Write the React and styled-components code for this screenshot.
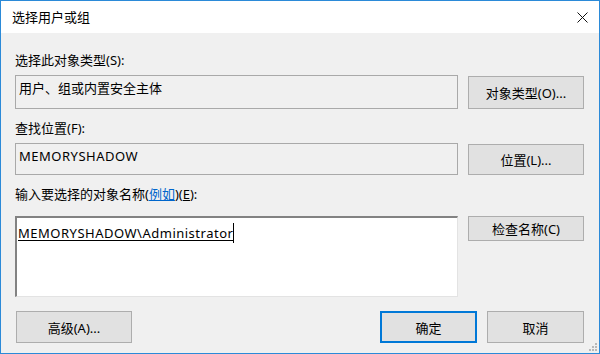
import React from 'react';
import styled, { createGlobalStyle } from 'styled-components';

const GlobalStyle = createGlobalStyle`
  html, body {
    margin: 0;
    padding: 0;
    background: #ffffff;
  }
  * {
    box-sizing: border-box;
  }
`;

const Window = styled.div`
  position: relative;
  width: 600px;
  height: 354px;
  border: 1px solid #2b8ad8;
  background: #f0f0f0;
  font-family: 'Noto Sans', 'Noto Sans CJK SC', sans-serif;
  font-size: 13px;
  color: #000;
  display: flex;
  flex-direction: column;
`;

const TitleBar = styled.div`
  height: 32px;
  background: #ffffff;
  display: flex;
  align-items: center;
  justify-content: space-between;
  padding: 0 0 0 11px;
`;

const Title = styled.span`
  font-size: 13px;
  line-height: 16px;
`;

const CloseButton = styled.div`
  width: 46px;
  height: 32px;
  display: flex;
  align-items: center;
  justify-content: center;
  margin-right: -6px;
`;

const Body = styled.div`
  flex: 1;
  padding: 19px 15px 0 14px;
  display: flex;
  flex-direction: column;
`;

const Label = styled.div`
  line-height: 16px;
  height: 16px;
  margin-top: ${p => p.$top || 0}px;
  white-space: nowrap;
`;

const Row = styled.div`
  display: grid;
  grid-template-columns: 443px 116px;
  column-gap: 10px;
  align-items: ${p => p.$align || 'stretch'};
  margin-top: ${p => p.$top || 0}px;
`;

const ReadBox = styled.div`
  height: ${p => p.$h}px;
  border: 1px solid #a9a9a9;
  background: #f0f0f0;
  padding: 4px 3px;
  line-height: 16px;
  white-space: nowrap;
`;

const Value = styled.span`
  letter-spacing: 0.5px;
`;

const NameArea = styled.div`
  height: 81px;
  background: #ffffff;
  border-top: 2px solid #828282;
  border-left: 2px solid #828282;
  border-right: 1px solid #e3e3e3;
  border-bottom: 1px solid #e3e3e3;
  padding: 5px 1px;
  line-height: 18px;
  white-space: nowrap;
`;

const Resolved = styled.span`
  letter-spacing: 0.5px;
  text-decoration: underline;
  text-underline-offset: 2px;
`;

const Caret = styled.span`
  display: inline-block;
  width: 1px;
  height: 20px;
  background: #000;
  vertical-align: -5px;
`;

const Button = styled.button`
  height: ${p => p.$h || 32}px;
  width: ${p => p.$w || 116}px;
  background: #e1e1e1;
  border: ${p => (p.$default ? '2px solid #0078d7' : '1px solid #adadad')};
  font: inherit;
  font-size: 13px;
  color: #000;
  padding: 0;
  display: flex;
  align-items: center;
  justify-content: center;
`;

const Link = styled.span`
  color: #0066cc;
  text-decoration: underline;
`;

const Key = styled.span`
  text-decoration: underline;
`;

const Footer = styled.div`
  display: flex;
  align-items: center;
  margin-top: 14px;
  padding-left: 1px;
`;

const Spacer = styled.div`
  flex: 1;
`;

const FooterRight = styled.div`
  display: flex;
  gap: 10px;
`;

const Grip = styled.svg`
  position: absolute;
  right: 1px;
  bottom: 1px;
`;

const CloseIcon = () => (
  <svg width="11" height="11" viewBox="0 0 11 11">
    <path d="M0.5 0.5 L10.5 10.5 M10.5 0.5 L0.5 10.5" stroke="#111" strokeWidth="1" fill="none" />
  </svg>
);

const ResizeGrip = () => (
  <Grip width="10" height="10" viewBox="0 0 10 10">
    {[
      [8, 2],
      [5, 5],
      [8, 5],
      [2, 8],
      [5, 8],
      [8, 8]
    ].map(([x, y]) => (
      <rect key={`${x}-${y}`} x={x - 1} y={y - 1} width="2" height="2" fill="#b8b8b8" />
    ))}
  </Grip>
);

const App = () => {
  return (
    <>
      <GlobalStyle />
      <Window>
        <TitleBar>
          <Title>选择用户或组</Title>
          <CloseButton>
            <CloseIcon />
          </CloseButton>
        </TitleBar>
        <Body>
          <Label>选择此对象类型(S):</Label>
          <Row $top={7} $align="end">
            <ReadBox $h={34}>用户、组或内置安全主体</ReadBox>
            <Button $h={33}>对象类型(O)...</Button>
          </Row>

          <Label $top={11}>查找位置(F):</Label>
          <Row $top={7} $align="end">
            <ReadBox $h={32}>
              <Value>MEMORYSHADOW</Value>
            </ReadBox>
            <Button $h={31}>位置(L)...</Button>
          </Row>

          <Label $top={11}>
            输入要选择的对象名称(<Link>例如</Link>)(<Key>E</Key>):
          </Label>
          <Row $top={14} $align="start">
            <NameArea>
              <Resolved>MEMORYSHADOW\Administrator</Resolved>
              <Caret />
            </NameArea>
            <Button $h={25}>检查名称(C)</Button>
          </Row>

          <Footer>
            <Button>高级(A)...</Button>
            <Spacer />
            <FooterRight>
              <Button $w={97} $default>
                确定
              </Button>
              <Button $w={97}>取消</Button>
            </FooterRight>
          </Footer>
        </Body>
        <ResizeGrip />
      </Window>
    </>
  );
};

export default App;
